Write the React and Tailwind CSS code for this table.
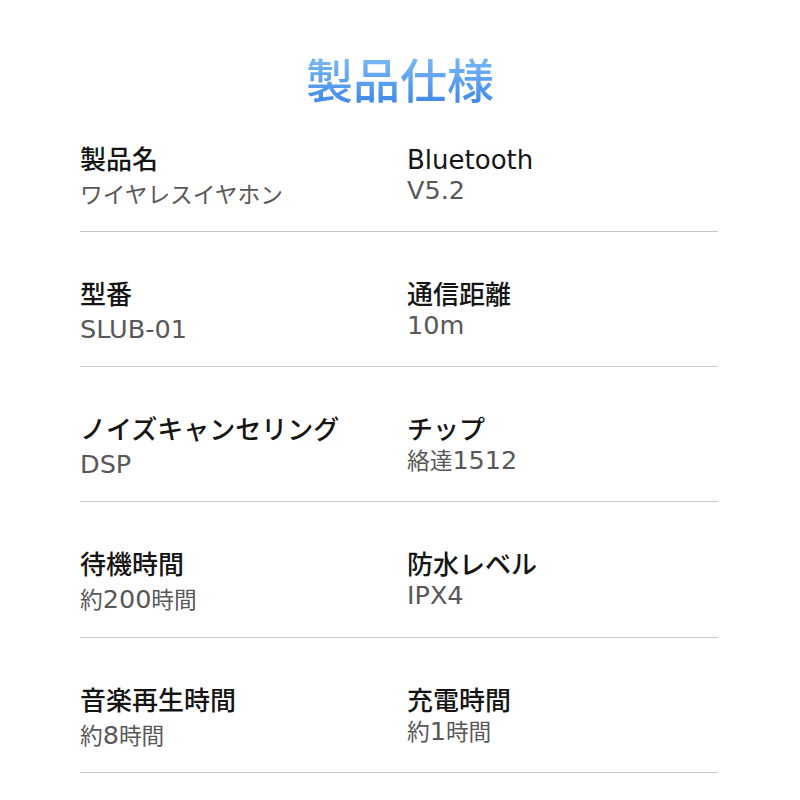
const specs = [
  [
    { label: "製品名", value: "ワイヤレスイヤホン" },
    { label: "Bluetooth", value: "V5.2" },
  ],
  [
    { label: "型番", value: "SLUB-01" },
    { label: "通信距離", value: "10m" },
  ],
  [
    { label: "ノイズキャンセリング", value: "DSP" },
    { label: "チップ", value: "絡達1512" },
  ],
  [
    { label: "待機時間", value: "約200時間" },
    { label: "防水レベル", value: "IPX4" },
  ],
  [
    { label: "音楽再生時間", value: "約8時間" },
    { label: "充電時間", value: "約1時間" },
  ],
];

// row heights follow the divider positions in the layout (231, 366, 501, 637, 772)
const rowHeights = ["h-[135px]", "h-[135px]", "h-[135px]", "h-[136px]", "h-[135px]"];

// latin runs are set a bit larger than the kana/kanji around them
function Mixed({ text }) {
  return text.split(/([\x00-\x7F]+)/).map((part, i) =>
    /^[\x00-\x7F]+$/.test(part) ? (
      <span key={i} className="text-[25.5px] leading-none">
        {part}
      </span>
    ) : (
      <span key={i}>{part}</span>
    )
  );
}

function SpecCell({ label, value, right }) {
  return (
    <div className="flex flex-col">
      <div className="h-[30px] text-[26px] leading-[30px] font-medium text-[#151515] whitespace-nowrap">
        {label}
      </div>
      <div
        className={`text-[22.7px] text-[#585858] whitespace-nowrap ${
          right ? "mt-[3px] h-[24px] leading-[24px]" : "mt-[6px] h-[28px] leading-[28px]"
        }`}
      >
        <Mixed text={value} />
      </div>
    </div>
  );
}

export default function App() {
  return (
    <div
      className="w-[800px] h-[800px] bg-white overflow-hidden"
      style={{ fontFamily: '"DejaVu Sans", "Noto Sans CJK JP", sans-serif' }}
    >
      <div className="h-[97px] flex justify-center items-start">
        <h1
          className="mt-[50px] text-[47px] leading-[56px] font-medium bg-gradient-to-b from-[#84c1f8] to-[#3c86e6] bg-clip-text text-transparent"
          style={{ fontFamily: '"Noto Sans CJK JP", sans-serif' }}
        >
          製品仕様
        </h1>
      </div>
      <div className="mx-[80px] w-[638px]">
        {specs.map((row, i) => (
          <div
            key={i}
            className={`grid grid-cols-[327px_1fr] items-start border-b border-[#c8c8c8] pt-[48px] ${rowHeights[i]}`}
          >
            <SpecCell {...row[0]} />
            <SpecCell {...row[1]} right />
          </div>
        ))}
      </div>
    </div>
  );
}
